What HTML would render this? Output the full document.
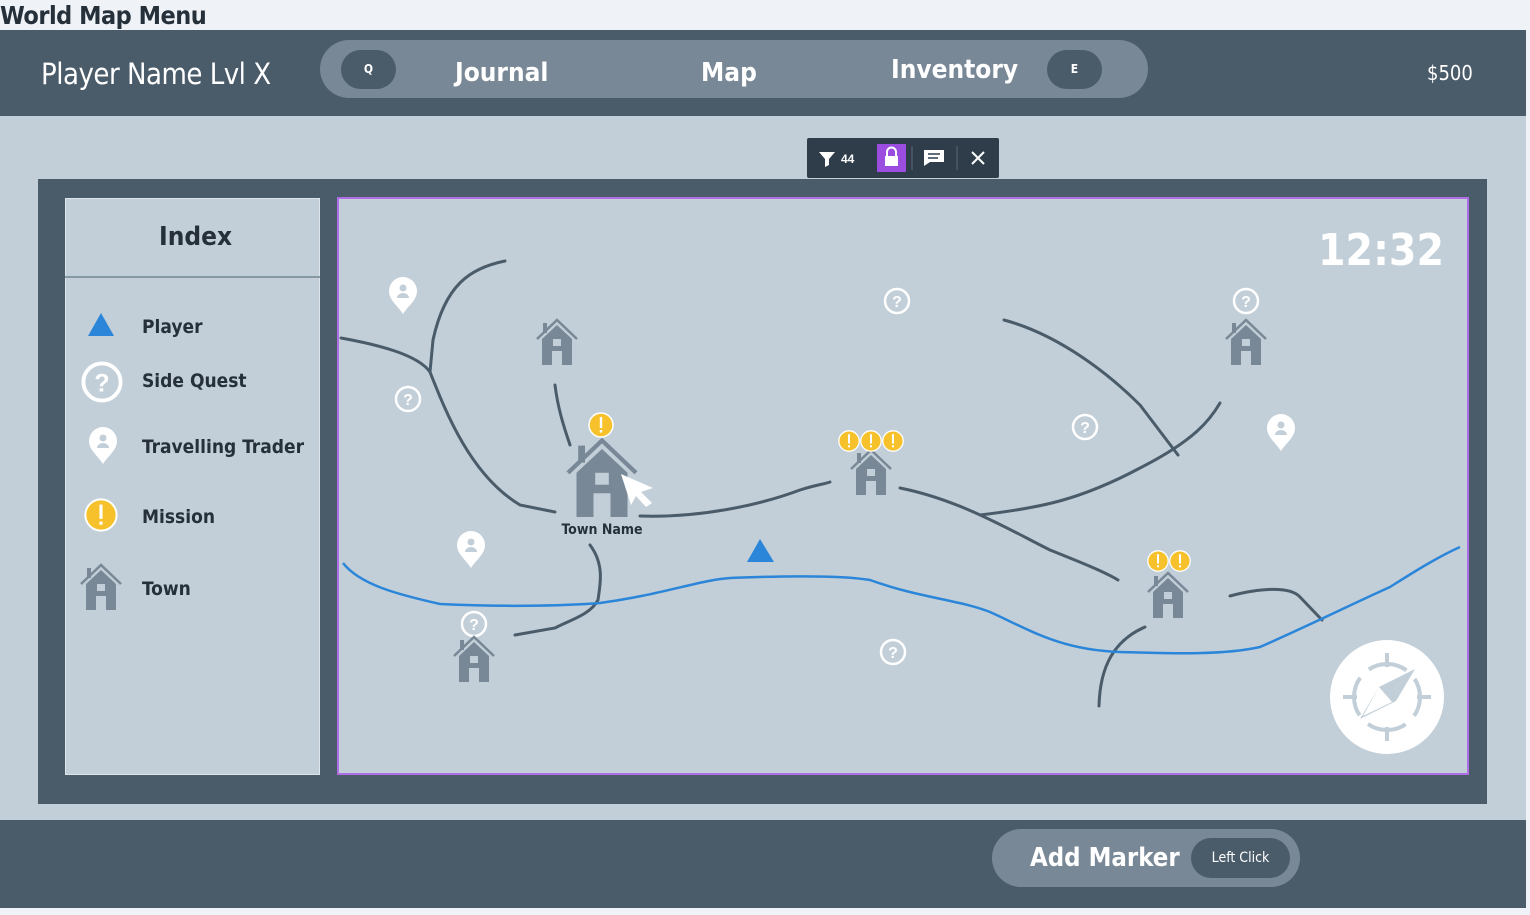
<!DOCTYPE html>
<html><head><meta charset="utf-8"><style>
*{margin:0;padding:0;box-sizing:border-box}
body{width:1530px;height:915px;background:#eff2f6;position:relative;overflow:hidden;font-family:"DejaVu Sans Condensed","Liberation Sans",sans-serif;font-weight:bold}
.abs{position:absolute}
.t{color:#fff}
</style></head><body>
<div class="abs" style="left:0;top:0;font-size:25px;color:#25303b;line-height:32px;letter-spacing:-0.5px">World Map Menu</div>
<div class="abs" style="left:0;top:30px;width:1526px;height:86px;background:#4a5b6a"></div>
<div class="abs t" style="left:41px;top:57px;font-size:29px;font-weight:normal;letter-spacing:-0.5px">Player Name Lvl X</div>
<div class="abs" style="left:320px;top:40px;width:828px;height:58px;border-radius:29px;background:#788896"></div>
<div class="abs t" style="left:341px;top:50px;width:55px;height:39px;border-radius:20px;background:#4a5b6a;font-size:12px;text-align:center;line-height:39px">Q</div>
<div class="abs t" style="left:1047px;top:50px;width:55px;height:39px;border-radius:20px;background:#4a5b6a;font-size:12px;text-align:center;line-height:39px">E</div>
<div class="abs t" style="left:455px;top:58px;font-size:26px">Journal</div>
<div class="abs t" style="left:701px;top:58px;font-size:26px">Map</div>
<div class="abs t" style="left:891px;top:55px;font-size:26px">Inventory</div>
<div class="abs t" style="left:1427px;top:61px;font-size:20px;font-weight:normal">$500</div>
<div class="abs" style="left:0;top:116px;width:1526px;height:704px;background:#c2cfd8"></div>
<div class="abs" style="left:807px;top:138px;width:192px;height:40px;background:#2f3d4b;border-radius:2px"></div>
<svg class="abs" style="left:807px;top:138px" width="192" height="40">
<path d="M12 14h16l-6 7v6l-4 2v-8z" fill="#fff"/>
<text x="34" y="25" fill="#fff" font-size="12" font-family="Liberation Sans" font-weight="bold">44</text>
<rect x="70" y="6" width="29" height="28" fill="#9b4de0"/>
<rect x="78" y="18" width="13" height="10" fill="#fff"/><path d="M80 18v-4a4.5 4.5 0 0 1 9 0v4" stroke="#fff" stroke-width="2" fill="none"/>
<line x1="105" y1="8" x2="105" y2="32" stroke="#5a6877"/>
<path d="M117 12h20v12h-14l-6 4z" fill="#fff"/><path d="M121 16h12M121 20h10" stroke="#2f3d4b" stroke-width="1.5"/>
<line x1="150" y1="8" x2="150" y2="32" stroke="#5a6877"/>
<path d="M165 14l12 12M177 14l-12 12" stroke="#fff" stroke-width="2"/>
</svg>
<div class="abs" style="left:38px;top:179px;width:1449px;height:625px;background:#4a5b6a"></div>
<div class="abs" style="left:65px;top:198px;width:255px;height:577px;background:#c2cfd8;border:1px solid #dde5eb"></div>
<div class="abs" style="left:65px;top:276px;width:255px;height:2px;background:#8899a6"></div>
<div class="abs" style="left:159px;top:222px;font-size:26px;color:#25303b">Index</div>
<div class="abs" style="left:142px;top:314px;font-size:19px;color:#25303b;line-height:26px">Player</div>
<div class="abs" style="left:142px;top:368px;font-size:19px;color:#25303b;line-height:26px">Side Quest</div>
<div class="abs" style="left:142px;top:434px;font-size:19px;color:#25303b;line-height:26px">Travelling Trader</div>
<div class="abs" style="left:142px;top:504px;font-size:19px;color:#25303b;line-height:26px">Mission</div>
<div class="abs" style="left:142px;top:576px;font-size:19px;color:#25303b;line-height:26px">Town</div>
<svg class="abs" style="left:0;top:0" width="1530" height="915">
<defs>
<g id="house"><path d="M-20 -6L0 -25L20 -6" stroke="#788896" stroke-width="2.5" fill="none"/><rect x="-14" y="-22" width="4" height="10" fill="#788896"/><path d="M-15 -6L0 -20L15 -6V20H5V6H-5V20H-15Z" fill="#788896"/><rect x="-4" y="-6" width="8" height="7" fill="#c2cfd8"/></g>
<g id="q"><circle r="12" fill="none" stroke="#fff" stroke-width="2.5"/><text y="6" text-anchor="middle" font-size="16" fill="#fff" font-family="Liberation Sans" font-weight="bold">?</text></g>
<g id="pin"><path d="M0 20C-5 12 -14 6 -14 -3A14 14 0 0 1 14 -3C14 6 5 12 0 20Z" fill="#fff"/><circle cy="-6" r="3.5" fill="#c2cfd8"/><path d="M-6 4a6 5 0 0 1 12 0z" fill="#c2cfd8"/></g>
<g id="m"><circle r="12" fill="#f6c12a" stroke="#fff" stroke-width="1.5"/><rect x="-1.2" y="-8" width="2.4" height="11" fill="#fff"/><rect x="-1.2" y="5" width="2.4" height="2.5" fill="#fff"/></g>
</defs>
<path d="M101 313L88 336H114Z" fill="#2b86d9"/>
<use href="#q" x="102" y="382" transform="translate(102 382) scale(1.55) translate(-102 -382)"/>
<use href="#pin" x="103" y="444"/>
<use href="#m" x="101" y="515" transform="translate(101 515) scale(1.3) translate(-101 -515)"/>
<use href="#house" x="101" y="590"/>
<rect x="338" y="198" width="1130" height="576" fill="#c2cfd8" stroke="#b06ee6" stroke-width="2"/>
<g stroke="#4a5b6a" stroke-width="3" fill="none" stroke-linecap="round">
<path d="M505 261C470 268 445 285 433 340L430 372C418 355 380 345 341 338"/>
<path d="M430 372C445 410 470 475 520 505L555 512"/>
<path d="M555 385C558 410 565 430 570 445"/>
<path d="M640 516C700 518 760 505 800 490C815 485 825 484 830 482"/>
<path d="M590 545C605 565 600 585 598 600C590 615 570 620 555 628L515 635"/>
<path d="M900 488C960 500 1010 530 1050 550C1080 562 1105 572 1118 580"/>
<path d="M980 515C1040 508 1080 500 1140 468C1195 440 1210 420 1220 403"/>
<path d="M1004 320C1060 335 1110 375 1140 405L1178 455"/>
<path d="M1230 596C1260 588 1290 586 1300 597L1322 620"/>
<path d="M1145 627C1115 640 1100 665 1099 706"/>
</g>
<path d="M343 563C360 585 400 595 440 604C500 607 560 606 600 603C660 595 700 580 730 578C780 576 840 575 870 580C920 598 960 600 990 612C1030 630 1060 650 1120 652C1160 653 1220 656 1260 647C1310 625 1350 605 1390 587C1420 568 1440 556 1460 547" stroke="#2b86d9" stroke-width="2.5" fill="none"/>
<use href="#pin" x="403" y="294"/>
<use href="#pin" x="471" y="548"/>
<use href="#pin" x="1281" y="431"/>
<use href="#q" x="408" y="399"/>
<use href="#q" x="897" y="301"/>
<use href="#q" x="1085" y="427"/>
<use href="#q" x="1246" y="301"/>
<use href="#q" x="474" y="624"/>
<use href="#q" x="893" y="652"/>
<use href="#house" x="557" y="345"/>
<use href="#house" x="1246" y="345"/>
<use href="#house" x="474" y="662"/>
<use href="#house" x="871" y="475"/>
<use href="#house" x="1168" y="598"/>
<g transform="translate(602 483) scale(1.7)"><use href="#house"/></g>
<use href="#m" x="601" y="425"/>
<use href="#m" x="849" y="441" transform="translate(849 441) scale(0.85) translate(-849 -441)"/>
<use href="#m" x="871" y="441" transform="translate(871 441) scale(0.85) translate(-871 -441)"/>
<use href="#m" x="893" y="441" transform="translate(893 441) scale(0.85) translate(-893 -441)"/>
<use href="#m" x="1158" y="561" transform="translate(1158 561) scale(0.85) translate(-1158 -561)"/>
<use href="#m" x="1180" y="561" transform="translate(1180 561) scale(0.85) translate(-1180 -561)"/>
<path d="M621 474L653 488L641 492L652 503L646 507L636 496L631 505Z" fill="#fff"/>
<text x="602" y="534" text-anchor="middle" font-size="14" fill="#25303b" font-family="DejaVu Sans Condensed" font-weight="bold">Town Name</text>
<path d="M760 539L747 562H774Z" fill="#2b86d9"/>
<text x="1444" y="265" text-anchor="end" font-size="44" fill="#fff" font-family="DejaVu Sans Condensed" font-weight="bold">12:32</text>
<circle cx="1387" cy="697" r="57" fill="#fff"/>
<circle cx="1387" cy="697" r="33" fill="none" stroke="#c2cfd8" stroke-width="4" stroke-dasharray="40 12" stroke-dashoffset="20"/>
<path d="M1387 653v14M1387 727v14M1343 697h14M1417 697h14" stroke="#c2cfd8" stroke-width="4"/>
<path d="M1415 669L1379 687L1360 719L1396 701Z" fill="#c2cfd8"/><path d="M1379 687L1392 702L1363 716Z" fill="#fff"/>
</svg>
<div class="abs" style="left:0;top:820px;width:1526px;height:88px;background:#4a5b6a"></div>
<div class="abs" style="left:992px;top:829px;width:308px;height:58px;border-radius:29px;background:#788896"></div>
<div class="abs t" style="left:1030px;top:843px;font-size:25.5px">Add Marker</div>
<div class="abs t" style="left:1191px;top:838px;width:99px;height:40px;border-radius:20px;background:#4a5b6a;font-size:14px;text-align:center;line-height:40px;font-weight:normal">Left Click</div>
</body></html>
